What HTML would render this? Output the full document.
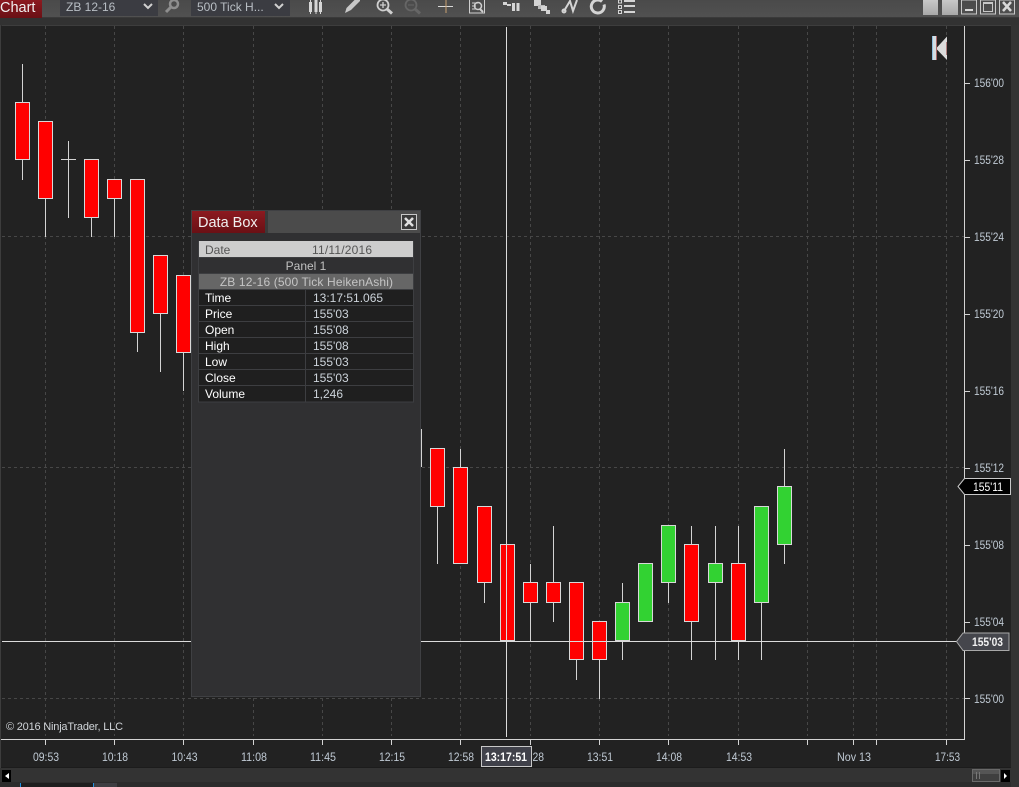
<!DOCTYPE html>
<html><head><meta charset="utf-8"><style>
html,body{margin:0;padding:0;background:#333;width:1019px;height:787px;overflow:hidden}
svg{display:block}
text{font-family:"Liberation Sans",sans-serif;font-size:12px;fill:#c4cdd6}
.a text{font-size:12px;fill:#c0cad4}
.l{fill:#fff}.v{fill:#ccd3da}
</style></head><body>
<svg width="1019" height="787" viewBox="0 0 1019 787" xmlns="http://www.w3.org/2000/svg">
<defs><linearGradient id="tb" x1="0" y1="0" x2="0" y2="1"><stop offset="0" stop-color="#4a4a4a"/><stop offset="1" stop-color="#515151"/></linearGradient>
<linearGradient id="rd" x1="0" y1="0" x2="0" y2="1"><stop offset="0" stop-color="#8c1a20"/><stop offset="1" stop-color="#6a1015"/></linearGradient>
<linearGradient id="gb" x1="0" y1="0" x2="0" y2="1"><stop offset="0" stop-color="#c8c8c8"/><stop offset="1" stop-color="#a8a8a8"/></linearGradient></defs>
<rect width="1019" height="787" fill="#333"/>
<!-- toolbar -->
<rect width="1019" height="18" fill="url(#tb)"/>
<rect y="18" width="1019" height="7" fill="#323232"/>
<rect y="17" width="1019" height="1" fill="#3a3a3a"/>
<rect width="42" height="18" fill="url(#rd)"/>
<text x="0" y="12" style="font-size:14.5px;fill:#f0f0f0">Chart</text>
<rect x="60" y="0" width="98" height="16" fill="#3b3c42"/>
<text x="66" y="11" style="font-size:12px;fill:#b8bec4">ZB 12-16</text>
<path d="M144 4l4 4 4-4" fill="none" stroke="#d0d0d0" stroke-width="2"/>
<circle cx="174" cy="4" r="4" fill="none" stroke="#8e8e8e" stroke-width="2.500"/><path d="M171 7l-5 5" stroke="#8e8e8e" stroke-width="3"/>
<rect x="191" y="0" width="99" height="16" fill="#3b3c42"/>
<text x="197" y="11" style="font-size:12px;fill:#b8bec4">500 Tick H...</text>
<path d="M275 4l4 4 4-4" fill="none" stroke="#d0d0d0" stroke-width="2"/>
<g stroke="#d6d6d6" fill="none">
<path d="M310.500 2v10M316 0v12M320.500 2v10" stroke-width="3"/>
<path d="M310.500 0v14M316 0v14M320.500 0v14" stroke-width="1"/>
</g>
<path d="M345 13l1.500-5 8-8h5.500v1l-9 9z" fill="#c8c8c8"/>
<g fill="none" stroke="#cfcfcf"><circle cx="383" cy="5" r="5.500" stroke-width="1.800"/><path d="M387 9l5 4.500" stroke-width="3"/><path d="M380 5h6M383 2v6" stroke-width="1.300"/></g>
<g fill="none" stroke="#666"><circle cx="411" cy="5" r="5.500" stroke-width="1.800"/><path d="M415 9l5 4.500" stroke-width="3"/><path d="M408 5h6"/></g>
<path d="M438 6.500h15" stroke="#d8d8d8"/><path d="M446 0v13" stroke="#c8a070"/>
<g fill="none" stroke="#cfcfcf"><path d="M469.500 0v13h15V0"/><path d="M472 3h6M472 6h4M472 9h4"/><circle cx="478" cy="6" r="3.500" stroke-width="1.500"/><path d="M480 9l3 3" stroke-width="2"/></g>
<g fill="#d4d4d4"><rect x="503" y="2" width="4" height="3"/><rect x="507" y="4" width="4" height="2"/><rect x="512" y="3" width="3" height="8"/><rect x="516.500" y="3" width="3" height="8"/></g>
<g fill="#d4d4d4"><rect x="534" y="0" width="7" height="6"/><rect x="538" y="5" width="7" height="4" fill="#bbb"/><rect x="541" y="6" width="6" height="5"/><rect x="546" y="10" width="4" height="4"/></g>
<g fill="none" stroke="#d4d4d4" stroke-width="2"><path d="M564 11L570 1l3 10 4-11"/><circle cx="564" cy="11" r="1.500"/></g>
<path d="M602 1.500a6.500 6.500 0 1 0 2 3" fill="none" stroke="#d4d4d4" stroke-width="3"/>
<g fill="none" stroke="#d4d4d4"><rect x="618.500" y="0" width="3" height="3"/><rect x="618.500" y="5.500" width="3" height="3"/><rect x="618.500" y="10.500" width="3" height="3"/></g>
<g fill="#d4d4d4"><rect x="624" y="0" width="11" height="2"/><rect x="624" y="5" width="11" height="2"/><rect x="624" y="11" width="11" height="2"/></g>
<rect x="923" y="0" width="15" height="15" fill="url(#gb)"/><rect x="942" y="0" width="16" height="15" fill="url(#gb)"/>
<g fill="none" stroke="#c8c8c8"><rect x="961.500" y="0" width="15" height="14"/><rect x="980.500" y="0" width="15" height="14"/><rect x="999.500" y="0" width="15" height="14"/><path d="M983.500 2.500h9v9h-9z"/></g>
<rect x="983" y="2" width="10" height="2" fill="#c8c8c8"/>
<rect x="965" y="9" width="8" height="2" fill="#d8d8d8"/>
<path d="M1003 2l8 9M1011 2l-8 9" stroke="#d8d8d8" stroke-width="2.500"/>
<!-- chart -->
<rect x="1" y="25" width="1010" height="743" fill="#222"/>
<path d="M0.500 25V768M1.500 25.500H1011.500V768" fill="none" stroke="#3d3d3d"/>
<g stroke="#474747" stroke-dasharray="3 3" fill="none">
<path d="M45.500 26V736M114.500 26V736M183.500 26V736M253.500 26V736M322.500 26V736M391.500 26V736M460.500 26V736M530.500 26V736M599.500 26V736M668.500 26V736M738.500 26V736M807.500 26V736M853.500 26V736M876.500 26V736M946.500 26V736"/>
<path d="M2 236.500H964M2 467.500H964M2 698.500H964"/>
</g>
<!-- axes -->
<path d="M964.500 26V739.500H1M45.500 740v5M114.500 740v5M183.500 740v5M253.500 740v5M322.500 740v5M391.500 740v5M460.500 740v5M530.500 740v5M599.500 740v5M668.500 740v5M738.500 740v5M807.500 740v5M853.500 740v5M876.500 740v5M946.500 740v5M965 83.500h5M965 160.500h5M965 237.500h5M965 314.500h5M965 391.500h5M965 468.500h5M965 545.500h5M965 622.500h5M965 698.500h5" stroke="#d4d4d4" fill="none"/>
<g class="a">
<text x="974" y="87" textLength="30" lengthAdjust="spacingAndGlyphs">156'00</text><text x="974" y="164" textLength="30" lengthAdjust="spacingAndGlyphs">155'28</text><text x="974" y="241" textLength="30" lengthAdjust="spacingAndGlyphs">155'24</text><text x="974" y="318" textLength="30" lengthAdjust="spacingAndGlyphs">155'20</text><text x="974" y="395" textLength="30" lengthAdjust="spacingAndGlyphs">155'16</text><text x="974" y="472" textLength="30" lengthAdjust="spacingAndGlyphs">155'12</text><text x="974" y="549" textLength="30" lengthAdjust="spacingAndGlyphs">155'08</text><text x="974" y="626" textLength="30" lengthAdjust="spacingAndGlyphs">155'04</text><text x="974" y="703" textLength="30" lengthAdjust="spacingAndGlyphs">155'00</text>
</g>
<g class="a" text-anchor="middle">
<text x="46" y="761" textLength="26" lengthAdjust="spacingAndGlyphs">09:53</text><text x="115" y="761" textLength="26" lengthAdjust="spacingAndGlyphs">10:18</text><text x="184.500" y="761" textLength="26" lengthAdjust="spacingAndGlyphs">10:43</text><text x="254" y="761" textLength="26" lengthAdjust="spacingAndGlyphs">11:08</text><text x="323" y="761" textLength="26" lengthAdjust="spacingAndGlyphs">11:45</text><text x="392" y="761" textLength="26" lengthAdjust="spacingAndGlyphs">12:15</text><text x="461" y="761" textLength="26" lengthAdjust="spacingAndGlyphs">12:58</text><text x="531" y="761" textLength="26" lengthAdjust="spacingAndGlyphs">13:28</text><text x="600" y="761" textLength="26" lengthAdjust="spacingAndGlyphs">13:51</text><text x="669" y="761" textLength="26" lengthAdjust="spacingAndGlyphs">14:08</text><text x="739" y="761" textLength="26" lengthAdjust="spacingAndGlyphs">14:53</text><text x="854" y="761" textLength="34" lengthAdjust="spacingAndGlyphs">Nov 13</text><text x="947.500" y="761" textLength="25" lengthAdjust="spacingAndGlyphs">17:53</text>
</g>
<text x="6" y="730" style="font-size:11px;letter-spacing:-.2px;fill:#d0d4d8">© 2016 NinjaTrader, LLC</text>
<!-- K marker -->
<path d="M947 36.500V60L936 48.500z" fill="#dcdcdc"/><path d="M932 36h4v24h-4z" fill="#d4dde2"/><rect x="932" y="36" width="1" height="24" fill="#8fbfe0"/><rect x="936" y="36" width="1" height="24" fill="#a86868"/><rect x="946" y="42" width="1" height="13" fill="#b08080"/>
<!-- wicks -->
<g stroke="#d4d4d4" fill="none">
<path d="M22.500 64V180M45.500 198V237M68.500 141V218M61 159.500H76M91.500 217V237M114.500 198V237M137.500 332V352M160.500 313V372M183.500 352V391M421.500 429V467M437.500 506V564M460.500 449V467M484.500 582V603M507.500 640V641M530.500 564V641M553.500 526V622M576.500 659V680M599.500 659V699M622.500 583V660M668.500 582V603M691.500 526V660M715.500 526V660M738.500 526V660M761.500 602V660M784.500 449V564"/>
</g>
<!-- candles -->
<g stroke="#d8d8d8" fill="#f00">
<rect x="15.500" y="102.500" width="14" height="57"/>
<rect x="38.500" y="121.500" width="14" height="77"/>
<rect x="84.500" y="159.500" width="14" height="58"/>
<rect x="107.500" y="179.500" width="14" height="19"/>
<rect x="130.500" y="179.500" width="14" height="153"/>
<rect x="153.500" y="255.500" width="14" height="58"/>
<rect x="176.500" y="275.500" width="14" height="77"/>
<rect x="430.500" y="448.500" width="14" height="58"/>
<rect x="453.500" y="467.500" width="14" height="96"/>
<rect x="477.500" y="506.500" width="14" height="76"/>
<rect x="500.500" y="544.500" width="14" height="96"/>
<rect x="523.500" y="582.500" width="14" height="20"/>
<rect x="546.500" y="582.500" width="14" height="20"/>
<rect x="569.500" y="582.500" width="14" height="77"/>
<rect x="592.500" y="621.500" width="14" height="38"/>
<rect x="684.500" y="544.500" width="14" height="77"/>
<rect x="731.500" y="563.500" width="14" height="77"/>
</g>
<g stroke="#d8d8d8" fill="#32d232">
<rect x="615.500" y="602.500" width="14" height="38"/>
<rect x="638.500" y="563.500" width="14" height="58"/>
<rect x="661.500" y="525.500" width="14" height="57"/>
<rect x="708.500" y="563.500" width="14" height="19"/>
<rect x="754.500" y="506.500" width="14" height="96"/>
<rect x="777.500" y="486.500" width="14" height="58"/>
</g>
<!-- crosshair -->
<path d="M506.500 27V737M2 641.500H958" stroke="#dcdcdc" fill="none"/>
<!-- price markers -->
<path d="M958 486.500L964.500 478.500H1010.500V494.500H964.500z" fill="#000" stroke="#c8c8c8"/>
<text x="973" y="491" textLength="30" lengthAdjust="spacingAndGlyphs" style="fill:#fff;font-size:12px">155'11</text>
<path d="M956.500 641.500L963 633H1009V650.500H963z" fill="#45464c" stroke="#a8a8a8"/>
<text x="972" y="646" textLength="31" lengthAdjust="spacingAndGlyphs" style="fill:#f0f0f0;font-size:12px;font-weight:bold">155'03</text>
<!-- time marker -->
<rect x="481.500" y="746.500" width="50" height="20" fill="#40414a" stroke="#c8c8c8"/>
<text x="506" y="761" text-anchor="middle" textLength="42" lengthAdjust="spacingAndGlyphs" style="fill:#fff;font-weight:bold;font-size:12px">13:17:51</text>
<!-- data box -->
<rect x="191" y="210" width="230" height="487" fill="#303032"/>
<path d="M191.500 210.500h229v486h-229z" fill="none" stroke="#3f4043"/>
<rect x="192" y="211" width="228" height="22" fill="#4b4b4b"/>
<rect x="192" y="211" width="73" height="22" fill="url(#rd)"/>
<rect x="265" y="211" width="3" height="22" fill="#3a3a3a"/>
<text x="198" y="227" style="font-size:14.500px;fill:#f0f0f0">Data Box</text>
<rect x="401.500" y="214.500" width="15" height="15" fill="#3a3a3a" stroke="#c8c8c8"/>
<path d="M405 218l8 8M413 218l-8 8" stroke="#e0e0e0" stroke-width="2.500"/>
<rect x="198" y="241" width="216" height="161" fill="#1f1f1f"/>
<rect x="199" y="241" width="214" height="16" fill="#cdcdcd"/>
<rect x="199" y="258" width="214" height="15" fill="#303032"/>
<rect x="199" y="274" width="214" height="15" fill="#666"/>
<path d="M198.500 241v161h215V241M199 257.500h214M199 273.500h214M199 289.500h214M199 305.500h214M199 321.500h214M199 337.500h214M199 353.500h214M199 369.500h214M199 385.500h214M305.500 290v112" fill="none" stroke="#3d3e41"/>
<text x="205" y="254" style="fill:#555">Date</text><text x="312" y="254" style="fill:#555;letter-spacing:.2px">11/11/2016</text>
<text x="306" y="270" text-anchor="middle" style="fill:#c0c0c0">Panel 1</text>
<text x="306.500" y="286" text-anchor="middle" style="fill:#c4c4c4;letter-spacing:.13px">ZB 12-16 (500 Tick HeikenAshi)</text>
<text class="l" x="205" y="302">Time</text><text class="v" x="313" y="302">13:17:51.065</text>
<text class="l" x="205" y="318">Price</text><text class="v" x="313" y="318">155'03</text>
<text class="l" x="205" y="334">Open</text><text class="v" x="313" y="334">155'08</text>
<text class="l" x="205" y="350">High</text><text class="v" x="313" y="350">155'08</text>
<text class="l" x="205" y="366">Low</text><text class="v" x="313" y="366">155'03</text>
<text class="l" x="205" y="382">Close</text><text class="v" x="313" y="382">155'03</text>
<text class="l" x="205" y="398">Volume</text><text class="v" x="313" y="398">1,246</text>
<!-- bottom -->
<rect x="1" y="768" width="1010" height="14" fill="#333"/>
<rect x="1" y="767" width="1010" height="1" fill="#1c1c1c"/>
<rect x="0" y="782" width="1019" height="5" fill="#2c2c2c"/>
<rect x="20" y="783" width="73" height="4" fill="#1e1e1e"/><rect x="20" y="783" width="1" height="4" fill="#1f8fe0"/><rect x="93" y="783" width="1" height="4" fill="#1f8fe0"/><rect x="94" y="783" width="23" height="4" fill="#3e3e42"/>
<rect x="2" y="770" width="9" height="12" fill="#000"/><path d="M5 776l4-3v6z" fill="#fff"/>
<rect x="1001" y="770" width="9" height="12" fill="#000"/><path d="M1007 776l-3-3v6z" fill="#fff"/>
<rect x="972.500" y="769.500" width="27" height="12" fill="#3f3f3f" stroke="#6a6a6a"/>
<rect x="973" y="770" width="26" height="4" fill="#555"/>
<path d="M976.500 772v7M979.500 772v7" stroke="#777"/>
<rect x="1011" y="25" width="8" height="762" fill="#333"/>
</svg>
</body></html>
